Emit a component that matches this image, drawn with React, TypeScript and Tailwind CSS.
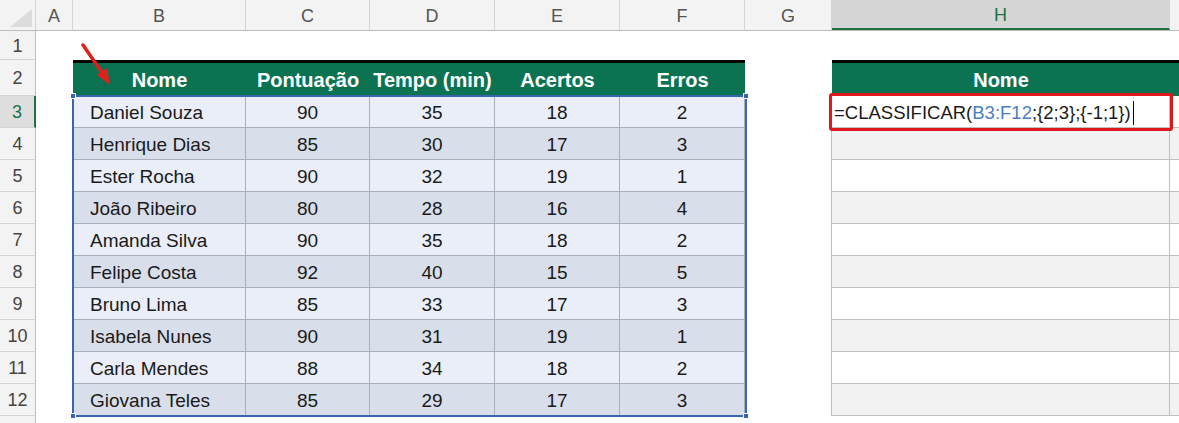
import type { ReactNode } from "react";

type Row = [string, number, number, number, number];

const data: Row[] = [
  ["Daniel Souza", 90, 35, 18, 2],
  ["Henrique Dias", 85, 30, 17, 3],
  ["Ester Rocha", 90, 32, 19, 1],
  ["João Ribeiro", 80, 28, 16, 4],
  ["Amanda Silva", 90, 35, 18, 2],
  ["Felipe Costa", 92, 40, 15, 5],
  ["Bruno Lima", 85, 33, 17, 3],
  ["Isabela Nunes", 90, 31, 19, 1],
  ["Carla Mendes", 88, 34, 18, 2],
  ["Giovana Teles", 85, 29, 17, 3],
];

const headers = ["Nome", "Pontuação", "Tempo (min)", "Acertos", "Erros"];
const widths = ["w-[173px]", "w-[124px]", "w-[125px]", "w-[125px]", "w-[125px]"];

function RowHead({ n, h, active }: { n?: number; h: string; active?: boolean }) {
  return (
    <div
      className={`${h} w-[36px] shrink-0 flex items-center justify-center pt-[2px] border-b border-[#d4d4d4] text-[18px] ${
        active
          ? "bg-[#dedede] text-[#1e7145] border-r-2 border-r-[#1e7145]"
          : "bg-[#f3f3f3] text-[#444] border-r border-r-[#bdbdbd]"
      }`}
    >
      {n}
    </div>
  );
}

function ColHead({ label, w, active }: { label: string; w: string; active?: boolean }) {
  return (
    <div
      className={`${w} shrink-0 h-full flex items-center justify-center pt-[2px] border-r border-[#d4d4d4] text-[18px] ${
        active ? "bg-[#d6d6d6] text-[#1e7145] border-b-2 border-b-[#1e7145]" : "text-[#555]"
      }`}
    >
      {label}
    </div>
  );
}

function Green({ w, children }: { w: string; children?: ReactNode }) {
  return (
    <div className={`${w} shrink-0 h-full bg-[#0b7352] border-t-[3px] border-black flex items-center justify-center text-white font-bold text-[20px]`}>
      {children}
    </div>
  );
}

export default function App() {
  return (
    <div className="relative w-[1179px] h-[423px] overflow-hidden bg-white font-['Liberation_Sans',Arial,sans-serif] text-[#1a1a1a]">
      {/* column headers */}
      <div className="flex h-[31px] bg-[#f3f3f3] border-b border-[#bdbdbd]">
        <div className="w-[36px] shrink-0 h-full border-r border-[#d4d4d4] flex items-end justify-end p-[3px]">
          <svg width="22" height="18" viewBox="0 0 22 18">
            <polygon points="22,0 22,18 0,18" fill="#dcdcdc" />
          </svg>
        </div>
        <ColHead label="A" w="w-[37px]" />
        {["B", "C", "D", "E", "F"].map((l, i) => (
          <ColHead key={l} label={l} w={widths[i]} />
        ))}
        <ColHead label="G" w="w-[87px]" />
        <ColHead label="H" w="w-[338px]" active />
        <div className="flex-1" />
      </div>

      {/* row 1 */}
      <div className="flex h-[29px]">
        <RowHead n={1} h="h-[29px]" />
      </div>

      {/* row 2 - table headers */}
      <div className="flex h-[36px]">
        <RowHead n={2} h="h-[36px]" />
        <div className="w-[37px] shrink-0" />
        {headers.map((t, i) => (
          <Green key={t} w={widths[i]}>
            {t}
          </Green>
        ))}
        <div className="w-[87px] shrink-0" />
        <Green w="w-[338px]">Nome</Green>
        <div className="flex-1 h-full bg-[#0b7352] border-t-[3px] border-black" />
      </div>

      {/* rows 3-12 */}
      {data.map((r, i) => {
        const bg = i % 2 === 0 ? "bg-[#e9eef8]" : "bg-[#d9dfea]";
        const right = i === 0 ? "bg-white" : i % 2 === 1 ? "bg-[#f2f2f2]" : "bg-white";
        return (
          <div key={r[0]} className="flex h-[32px]">
            <RowHead n={i + 3} h="h-[32px]" active={i === 0} />
            <div className="w-[37px] shrink-0" />
            <div className={`w-[173px] shrink-0 ${bg} border-r border-b border-[#a9afba] flex items-center pl-[17px] pt-[3px] text-[19px]`}>
              {r[0]}
            </div>
            {r.slice(1).map((v, j) => (
              <div
                key={j}
                className={`${widths[j + 1]} shrink-0 ${bg} border-r border-b border-[#a9afba] flex items-center justify-center pt-[3px] text-[19px]`}
              >
                {v}
              </div>
            ))}
            <div className="w-[86px] shrink-0" />
            <div className={`w-[339px] shrink-0 ${right} border-l border-r border-b border-[#bfbfbf] flex items-center pl-[2px] pt-[2px] text-[18.5px] whitespace-nowrap`}>
              {i === 0 && (
                <>
                  <span>=CLASSIFICAR(</span>
                  <span className="text-[#4a7ec2]">B3:F12</span>
                  <span>;{"{2;3}"};{"{-1;1}"})</span>
                  <span className="ml-[2px] inline-block w-px h-[24px] bg-black" />
                </>
              )}
            </div>
            <div className={`flex-1 ${right} border-b border-[#bfbfbf]`} />
          </div>
        );
      })}

      {/* row 13 (partial) */}
      <div className="flex h-[32px]">
        <RowHead h="h-[32px]" />
      </div>

      {/* selection range B3:F12 */}
      <div className="absolute left-[72px] top-[95px] w-[675px] h-[322px] border-2 border-[#3a66ad]">
        <div className="absolute -left-[4px] -top-[4px] w-[6px] h-[6px] bg-[#3a66ad] border border-white" />
        <div className="absolute -right-[4px] -top-[4px] w-[6px] h-[6px] bg-[#3a66ad] border border-white" />
        <div className="absolute -left-[4px] -bottom-[4px] w-[6px] h-[6px] bg-[#3a66ad] border border-white" />
        <div className="absolute -right-[4px] -bottom-[4px] w-[6px] h-[6px] bg-[#3a66ad] border border-white" />
      </div>

      {/* red highlight around the formula */}
      <div className="absolute left-[829px] top-[93px] w-[344px] h-[38px] border-[3px] border-[#e0171d] rounded-[3px]" />

      {/* red arrow */}
      <svg className="absolute left-[78px] top-[40px]" width="40" height="50" viewBox="0 0 40 50">
        <line x1="5" y1="5" x2="25" y2="34" stroke="#e0201b" strokeWidth="3.5" strokeLinecap="round" />
        <polygon points="32,45 19,35 29,28" fill="#e0201b" />
      </svg>
    </div>
  );
}
